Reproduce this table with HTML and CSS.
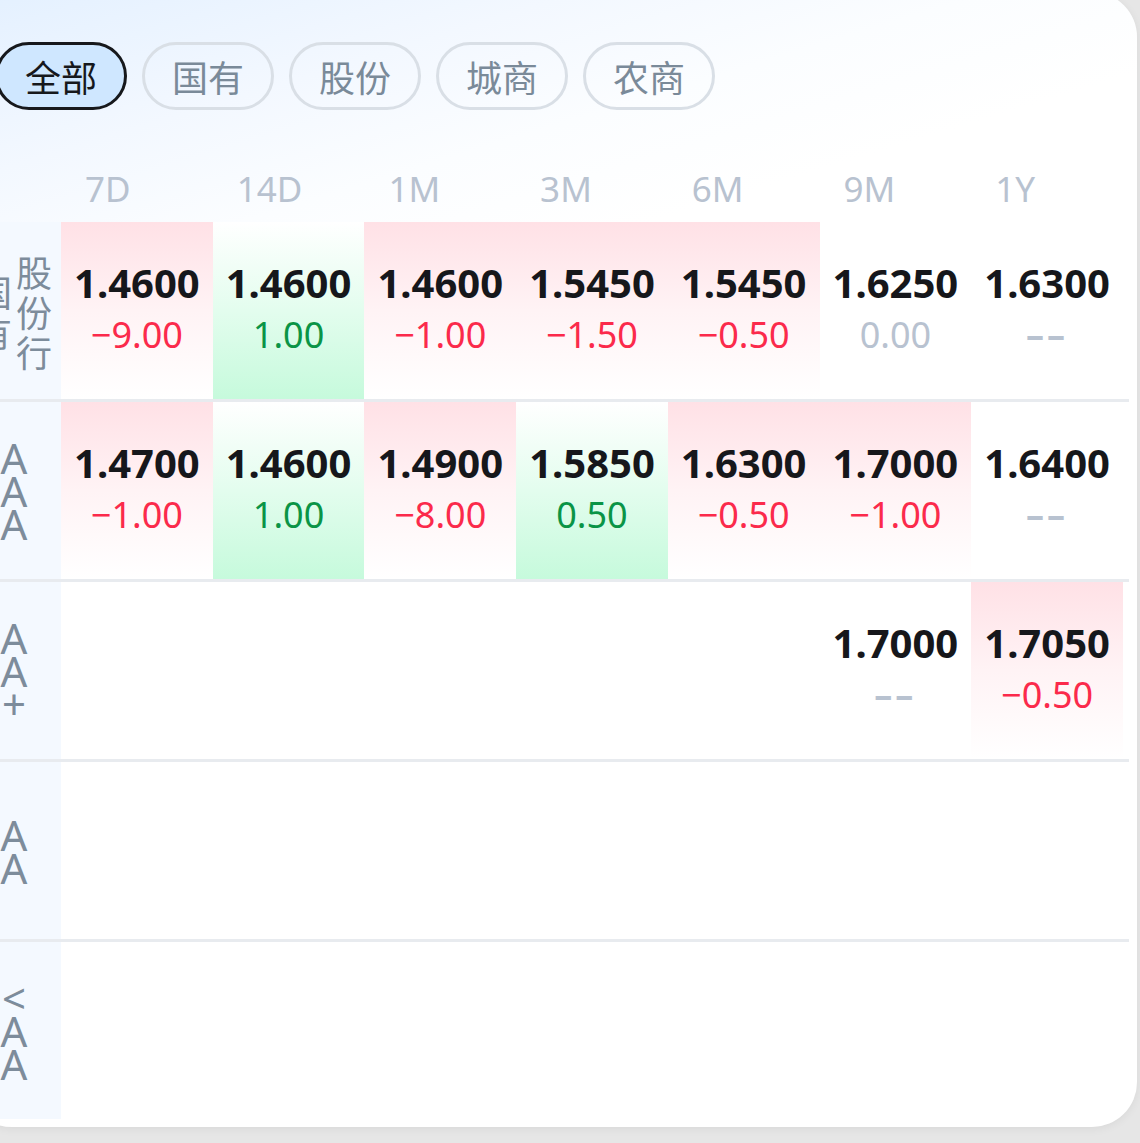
FILE: index.html
```html
<!DOCTYPE html>
<html lang="zh-CN">
<head>
<meta charset="utf-8">
<title>利率</title>
<link rel="stylesheet" href="styles.css">
</head>
<body>
<div class="card">
  <div class="chips">
    <span class="chip active">全部</span>
    <span class="chip">国有</span>
    <span class="chip">股份</span>
    <span class="chip">城商</span>
    <span class="chip">农商</span>
  </div>

  <div class="grid head">
    <div></div>
    <div class="h">7D</div>
    <div class="h">14D</div>
    <div class="h">1M</div>
    <div class="h">3M</div>
    <div class="h">6M</div>
    <div class="h">9M</div>
    <div class="h">1Y</div>
    <div></div>
  </div>

  <div class="grid row">
    <div class="lab"><span class="cjk">国有</span><span class="cjk">股份行</span></div>
    <div class="cell up"><b>1.4600</b><span class="chg neg">−9.00</span></div>
    <div class="cell down"><b>1.4600</b><span class="chg pos">1.00</span></div>
    <div class="cell up"><b>1.4600</b><span class="chg neg">−1.00</span></div>
    <div class="cell up"><b>1.5450</b><span class="chg neg">−1.50</span></div>
    <div class="cell up"><b>1.5450</b><span class="chg neg">−0.50</span></div>
    <div class="cell"><b>1.6250</b><span class="chg flat">0.00</span></div>
    <div class="cell"><b>1.6300</b><span class="chg flat dash">––</span></div>
    <div></div>
  </div>

  <div class="grid row">
    <div class="lab"><span class="lat">AAA</span></div>
    <div class="cell up"><b>1.4700</b><span class="chg neg">−1.00</span></div>
    <div class="cell down"><b>1.4600</b><span class="chg pos">1.00</span></div>
    <div class="cell up"><b>1.4900</b><span class="chg neg">−8.00</span></div>
    <div class="cell down"><b>1.5850</b><span class="chg pos">0.50</span></div>
    <div class="cell up"><b>1.6300</b><span class="chg neg">−0.50</span></div>
    <div class="cell up"><b>1.7000</b><span class="chg neg">−1.00</span></div>
    <div class="cell"><b>1.6400</b><span class="chg flat dash">––</span></div>
    <div></div>
  </div>

  <div class="grid row">
    <div class="lab"><span class="lat">AA+</span></div>
    <div class="cell"></div>
    <div class="cell"></div>
    <div class="cell"></div>
    <div class="cell"></div>
    <div class="cell"></div>
    <div class="cell"><b>1.7000</b><span class="chg flat dash">––</span></div>
    <div class="cell up"><b>1.7050</b><span class="chg neg">−0.50</span></div>
    <div></div>
  </div>

  <div class="grid row">
    <div class="lab"><span class="lat">AA</span></div>
    <div class="cell"></div>
    <div class="cell"></div>
    <div class="cell"></div>
    <div class="cell"></div>
    <div class="cell"></div>
    <div class="cell"></div>
    <div class="cell"></div>
    <div></div>
  </div>

  <div class="grid row last">
    <div class="lab"><span class="lat">&lt;AA</span></div>
    <div class="cell"></div>
    <div class="cell"></div>
    <div class="cell"></div>
    <div class="cell"></div>
    <div class="cell"></div>
    <div class="cell"></div>
    <div class="cell"></div>
    <div></div>
  </div>
</div>
</body>
</html>
```

FILE: styles.css
```css
html, body {
  margin: 0;
  padding: 0;
}
body {
  background: #e6e6e6;
  overflow: hidden;
  width: 1140px;
  height: 1143px;
  font-family: "Noto Sans", "Noto Sans CJK SC", sans-serif;
}
.card {
  box-sizing: border-box;
  margin-left: -33px;
  margin-top: -8px;
  width: 1170px;
  height: 1135px;
  border-radius: 45px;
  padding: 50px 8px 8px 0;
  background: linear-gradient(163deg, #e3f0ff 0px, #f3f8ff 180px, #fbfdff 300px, #ffffff 420px);
  box-shadow: 0 2px 10px rgba(0, 0, 0, 0.06);
}
.chips {
  display: flex;
  gap: 15px;
  padding-left: 28px;
}
.chip {
  box-sizing: border-box;
  height: 68px;
  width: 132px;
  border: 3px solid #d9dfe6;
  border-radius: 34px;
  display: flex;
  align-items: center;
  justify-content: center;
  font-family: "Noto Sans CJK SC", sans-serif;
  font-size: 36px;
  color: #7a8a99;
}
.chip.active {
  background: #cfe7ff;
  border-color: #16181c;
  color: #16181c;
}
.grid {
  display: grid;
  grid-template-columns: 94px repeat(7, 151.71px) 1fr;
}
.head {
  margin-top: 45px;
  height: 67px;
  align-items: center;
}
.h {
  padding-left: 24px;
  font-size: 35px;
  line-height: 67px;
  color: #b8c2d0;
}
.row {
  height: 177px;
  border-bottom: 3px solid #e8ebef;
}
.row.last {
  border-bottom: none;
}
.lab {
  background: #f4f9ff;
  display: flex;
  align-items: center;
  justify-content: center;
  color: #7d8c9b;
}
.cjk {
  width: 40px;
  font-family: "Noto Sans CJK SC", sans-serif;
  font-size: 36px;
  line-height: 40px;
  text-align: center;
  word-break: break-all;
}
.lat {
  width: 34px;
  font-size: 42px;
  line-height: 33px;
  text-align: center;
  word-break: break-all;
}
.cell {
  box-sizing: border-box;
  display: flex;
  flex-direction: column;
  align-items: center;
  padding-top: 37px;
  gap: 6px;
}
.cell.up {
  background: linear-gradient(180deg, #ffe1e6 0%, #fff3f5 50%, #ffffff 100%);
}
.cell.down {
  background: linear-gradient(180deg, #ffffff 0%, #e3fdee 50%, #c6fadc 100%);
}
.cell b {
  font-weight: 700;
  font-size: 40px;
  line-height: 48px;
  color: #16171b;
}
.chg {
  font-size: 36px;
  line-height: 44px;
}
.neg { color: #fb2a4b; }
.pos { color: #0a9446; }
.flat { color: #b8c2d0; }
.dash {
  letter-spacing: 3px;
  font-weight: 700;
}
```
